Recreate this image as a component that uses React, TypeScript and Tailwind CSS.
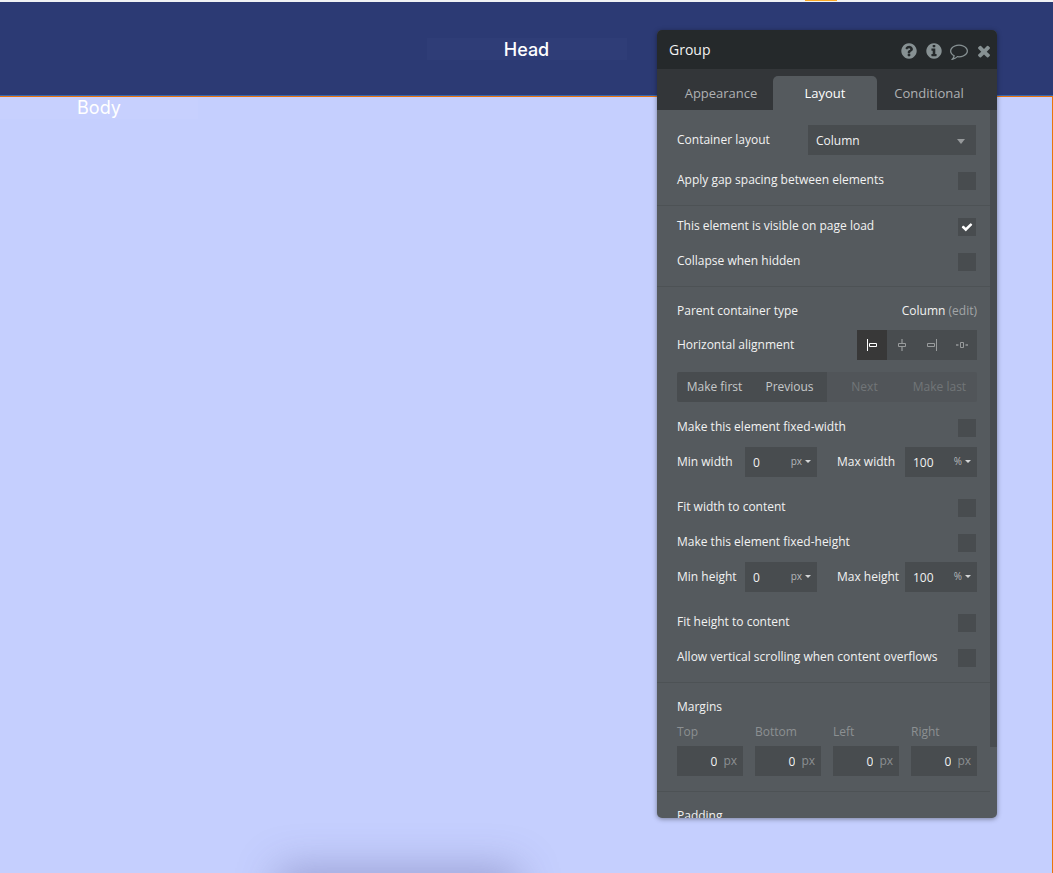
import React, { useId, useState } from "react";

const CIRCLE =
  "M1664 896q0 209-103 385.500t-279.500 279.500-385.500 103-385.500-103-279.500-279.500-103-385.500 103-385.500 279.500-279.500 385.500-103 385.500 103 279.500 279.500 103 385.500z";

const glyphs = {
  question:
    "M1024 1376v-192q0-14-9-23t-23-9h-192q-14 0-23 9t-9 23v192q0 14 9 23t23 9h192q14 0 23-9t9-23zm256-672q0-88-55.500-163t-138.500-116-170-41q-243 0-371 213-15 24 8 42l132 100q7 6 19 6 16 0 25-12 53-68 86-92 34-24 86-24 48 0 85.500 26t37.500 59q0 38-20 61t-68 45q-63 28-115.500 86.500t-52.500 125.500v36q0 14 9 23t23 9h192q14 0 23-9t9-23q0-19 21.500-49.500t54.500-49.500q32-18 49-28.500t46-35 44.500-48 28-60.500 12.500-81z" +
    CIRCLE,
  info:
    "M1152 1376v-160q0-14-9-23t-23-9h-96v-512q0-14-9-23t-23-9h-320q-14 0-23 9t-9 23v160q0 14 9 23t23 9h96v320h-96q-14 0-23 9t-9 23v160q0 14 9 23t23 9h448q14 0 23-9t9-23zm-128-896v-160q0-14-9-23t-23-9h-192q-14 0-23 9t-9 23v160q0 14 9 23t23 9h192q14 0 23-9t9-23z" +
    CIRCLE,
  comment:
    "M896 384q-204 0-381.500 69.500t-282 187.500-104.500 255q0 112 71.500 213.500t201.500 175.500l87 50-27 96q-24 91-70 172 152-63 275-171l43-38 57 6q69 8 130 8 204 0 381.500-69.500t282-187.500 104.500-255-104.500-255-282-187.500-381.500-69.500zm896 512q0 174-120 321.500t-326 233-450 85.500q-70 0-145-8-198 175-460 242-49 14-114 22h-5q-15 0-27-10.500t-16-27.500v-1q-3-4-.5-12t2-10 4.500-9.500l6-9 7-8.500 8-9q7-8 31-34.500t34.500-38 31-39.500 32.500-51 27-59 26-76q-157-89-247.500-220t-90.500-281q0-174 120-321.500t326-233 450-85.500 450 85.500 326 233 120 321.500z",
  close:
    "M1490 1322q0 40-28 68l-136 136q-28 28-68 28t-68-28l-294-294-294 294q-28 28-68 28t-68-28l-136-136q-28-28-28-68t28-68l294-294-294-294q-28-28-28-68t28-68l136-136q28-28 68-28t68 28l294 294 294-294q28-28 68-28t68 28l136 136q28 28 28 68t-28 68l-294 294 294 294q28 28 28 68z",
  check:
    "M1671 566q0 40-28 68l-724 724-136 136q-28 28-68 28t-68-28l-136-136-362-362q-28-28-28-68t28-68l136-136q28-28 68-28t68 28l294 295 656-657q28-28 68-28t68 28l136 136q28 28 28 68z",
};

function Glyph({ name, className }: { name: keyof typeof glyphs; className: string }) {
  return (
    <svg viewBox="0 0 1792 1792" fillRule="evenodd" className={`fill-current ${className}`} aria-hidden="true">
      <path d={glyphs[name]} />
    </svg>
  );
}

function Section({ className, children }: { className: string; children: React.ReactNode }) {
  return (
    <section className={`flex flex-col border-b border-[#4d5255] pr-[13px] pl-5 ${className}`}>
      {children}
    </section>
  );
}

function CheckRow({ label, checked = false, className = "" }: { label: string; checked?: boolean; className?: string }) {
  const id = useId();
  const [on, setOn] = useState(checked);
  return (
    <div className={`flex h-[30px] items-center justify-between pr-px ${className}`}>
      <label htmlFor={id}>{label}</label>
      <span className="mt-0.5 grid size-[18px]">
        <input
          id={id}
          type="checkbox"
          checked={on}
          onChange={(e) => setOn(e.target.checked)}
          className="col-start-1 row-start-1 size-[18px] appearance-none bg-[#484c4f]"
        />
        {on && (
          <Glyph
            name="check"
            className="pointer-events-none col-start-1 row-start-1 size-3 place-self-center text-white"
          />
        )}
      </span>
    </div>
  );
}

function SizeField({ label, value, unit }: { label: string; value: string; unit: string }) {
  const id = useId();
  return (
    <div className="flex w-[140px] items-center justify-between">
      <label htmlFor={id}>{label}</label>
      <div className="flex h-[30px] w-[72px] items-center bg-[#484c4f] pr-1.5 pl-2">
        <input id={id} type="text" defaultValue={value} className="w-6 grow bg-transparent pt-0.5 outline-none" />
        <div className="grid items-center">
          <select
            aria-label={`${label} unit`}
            defaultValue={unit}
            className="col-start-1 row-start-1 w-6 appearance-none bg-transparent pr-[9px] text-[10px] text-[#b4b7b9] [text-align-last:right]"
          >
            <option>px</option>
            <option>%</option>
          </select>
          <svg viewBox="0 0 6 3" className="pointer-events-none col-start-1 row-start-1 h-[3px] w-1.5 justify-self-end fill-[#d4d6d7]">
            <path d="M0 0h6L3 3z" />
          </svg>
        </div>
      </div>
    </div>
  );
}

function MarginField({ label }: { label: string }) {
  const id = useId();
  return (
    <div className="flex flex-col">
      <label htmlFor={id} className="h-5 leading-5 text-[#8c9092]">
        {label}
      </label>
      <div className="mt-1 flex h-[30px] items-center gap-1.5 bg-[#484c4f] pr-1.5">
        <input id={id} type="text" defaultValue="0" className="w-0 grow bg-transparent pt-0.5 text-right outline-none" />
        <span className="text-[#8c9092]">px</span>
      </div>
    </div>
  );
}

const alignments = [
  {
    name: "Left",
    icon: (
      <>
        <path d="M3.5 2v12" />
        <path d="M5.500 6.500h7v3h-7z" />
      </>
    ),
  },
  {
    name: "Center",
    icon: (
      <>
        <path d="M8 2v4M8 10v4" strokeWidth="2" opacity="0.6" />
        <path d="M4.500 6.500h7v3h-7z" />
      </>
    ),
  },
  {
    name: "Right",
    icon: (
      <>
        <path d="M12.5 2v12" />
        <path d="M3.500 6.500h7v3h-7z" />
      </>
    ),
  },
  {
    name: "Stretch",
    icon: (
      <>
        <path d="M6.500 5.500h3v5h-3z" />
        <path d="M2 8h2.500M11.500 8H14" strokeWidth="2" opacity="0.7" />
      </>
    ),
  },
];

function LayoutPanel() {
  const [align, setAlign] = useState("Left");
  return (
    <aside
      aria-label="Group properties"
      className="absolute top-[30px] right-14 bottom-[55px] flex w-[340px] flex-col overflow-hidden rounded-[5px] bg-[#555a5e] font-['Open_Sans',sans-serif] text-xs text-[#f2f2f2] shadow-[0_1px_5px_rgba(0,0,0,0.4)]"
    >
      <header className="flex h-[39px] shrink-0 items-center justify-between bg-[#25292b] pr-1 pl-3">
        <h2 className="text-sm">Group</h2>
        <div className="flex items-center gap-[7px] pt-0.5 text-[#879193]">
          <button type="button" aria-label="Help">
            <Glyph name="question" className="size-[18px]" />
          </button>
          <button type="button" aria-label="Info">
            <Glyph name="info" className="size-[18px]" />
          </button>
          <button type="button" aria-label="Comment">
            <Glyph name="comment" className="size-[18px]" />
          </button>
          <button type="button" aria-label="Close">
            <Glyph name="close" className="size-[18px]" />
          </button>
        </div>
      </header>

      <div role="tablist" className="flex h-[41px] shrink-0 items-end bg-[#333639] pl-3 text-[13px] text-[#afb1b3]">
        <button type="button" role="tab" aria-selected="false" className="h-[34px] w-[104px] pt-0.5">
          Appearance
        </button>
        <button
          type="button"
          role="tab"
          aria-selected="true"
          className="h-[34px] w-[104px] rounded-t-[5px] bg-[#555a5e] pt-0.5 text-white"
        >
          Layout
        </button>
        <button type="button" role="tab" aria-selected="false" className="h-[34px] w-[104px] pt-0.5">
          Conditional
        </button>
      </div>

      <div className="flex min-h-0 grow">
        <div className="min-w-0 grow overflow-hidden">
          <Section className="gap-2.5 pt-[15px] pb-2.5">
            <div className="flex h-[30px] items-center justify-between pr-px">
              <label htmlFor="container-layout">Container layout</label>
              <div className="grid w-[168px] items-center">
                <select
                  id="container-layout"
                  defaultValue="Column"
                  className="col-start-1 row-start-1 h-[30px] appearance-none bg-[#484c4f] px-2 pt-0.5"
                >
                  <option>Column</option>
                  <option>Row</option>
                </select>
                <svg
                  viewBox="0 0 8 5"
                  className="pointer-events-none col-start-1 row-start-1 mt-0.5 mr-[11px] h-[5px] w-2 justify-self-end fill-[#96999b]"
                >
                  <path d="M0 0h8L4 5z" />
                </svg>
              </div>
            </div>
            <CheckRow label="Apply gap spacing between elements" />
          </Section>

          <Section className="gap-[5px] pt-[5px] pb-2.5">
            <CheckRow label="This element is visible on page load" checked />
            <CheckRow label="Collapse when hidden" />
          </Section>

          <Section className="pt-[9px] pb-2.5">
            <div className="flex h-[30px] items-center justify-between">
              <span>Parent container type</span>
              <span>
                Column{" "}
                <a href="#edit" className="text-[#a2a5a7]">
                  (edit)
                </a>
              </span>
            </div>
            <div className="mt-1 flex h-[30px] items-center justify-between">
              <span>Horizontal alignment</span>
              <div role="group" aria-label="Horizontal alignment" className="flex bg-[#484c4f]">
                {alignments.map(({ name, icon }) => (
                  <button
                    key={name}
                    type="button"
                    aria-label={name}
                    aria-pressed={align === name}
                    onClick={() => setAlign(name)}
                    className={`grid size-[30px] place-items-center ${
                      align === name ? "bg-[#383838] text-white" : "text-[#989b9c]"
                    }`}
                  >
                    <svg viewBox="0 0 16 16" className="size-4 fill-none stroke-current">
                      {icon}
                    </svg>
                  </button>
                ))}
              </div>
            </div>
            <div className="mt-3 grid h-[30px] grid-cols-4 overflow-hidden rounded-[2px]">
              <button type="button" className="bg-[#484c4f] text-[#c6c8c9]">
                Make first
              </button>
              <button type="button" className="bg-[#484c4f] text-[#c6c8c9]">
                Previous
              </button>
              <button type="button" disabled className="bg-[#515559] text-[#717578]">
                Next
              </button>
              <button type="button" disabled className="bg-[#515559] text-[#717578]">
                Make last
              </button>
            </div>
            <CheckRow label="Make this element fixed-width" className="mt-2.5" />
            <div className="mt-[5px] flex justify-between">
              <SizeField label="Min width" value="0" unit="px" />
              <SizeField label="Max width" value="100" unit="%" />
            </div>
            <CheckRow label="Fit width to content" className="mt-[15px]" />
            <CheckRow label="Make this element fixed-height" className="mt-[5px]" />
            <div className="mt-[5px] flex justify-between">
              <SizeField label="Min height" value="0" unit="px" />
              <SizeField label="Max height" value="100" unit="%" />
            </div>
            <CheckRow label="Fit height to content" className="mt-[15px]" />
            <CheckRow label="Allow vertical scrolling when content overflows" className="mt-[5px]" />
          </Section>

          <Section className="pt-[9px] pb-[15px]">
            <h3 className="h-[30px] leading-[30px]">Margins</h3>
            <div className="grid grid-cols-4 gap-3">
              <MarginField label="Top" />
              <MarginField label="Bottom" />
              <MarginField label="Left" />
              <MarginField label="Right" />
            </div>
          </Section>

          <Section className="pt-[9px] pb-[15px]">
            <h3 className="h-[30px] leading-[30px]">Padding</h3>
          </Section>
        </div>
        <div className="w-[7px] shrink-0">
          <div className="h-9/10 bg-[#484c4f]" />
        </div>
      </div>
    </aside>
  );
}

export default function App() {
  return (
    <div className="relative flex h-screen flex-col overflow-hidden bg-[#c5cffe] font-[Inter,sans-serif] text-lg text-white">
      <div className="flex h-0.5 shrink-0 justify-end bg-[#f0f2f4] pr-[216px]">
        <div className="h-px w-8 bg-[#f9a825]" />
      </div>
      <div className="flex h-[94px] shrink-0 items-center justify-center border-b border-[#3a68b0] bg-[#2c3a74]">
        <h1 className="w-[200px] bg-[#2f3d77] pt-0.5 text-center leading-5 font-medium">Head</h1>
      </div>
      <main className="grow border-t border-r border-[#ea740c]">
        <p className="w-[198px] bg-[#c7d0fe] text-center leading-[22px]">Body</p>
      </main>
      <div className="absolute top-full left-[283px] h-10 w-[230px] shadow-[0_0_40px_5px_rgba(90,90,150,0.4)]" />
      <LayoutPanel />
    </div>
  );
}
